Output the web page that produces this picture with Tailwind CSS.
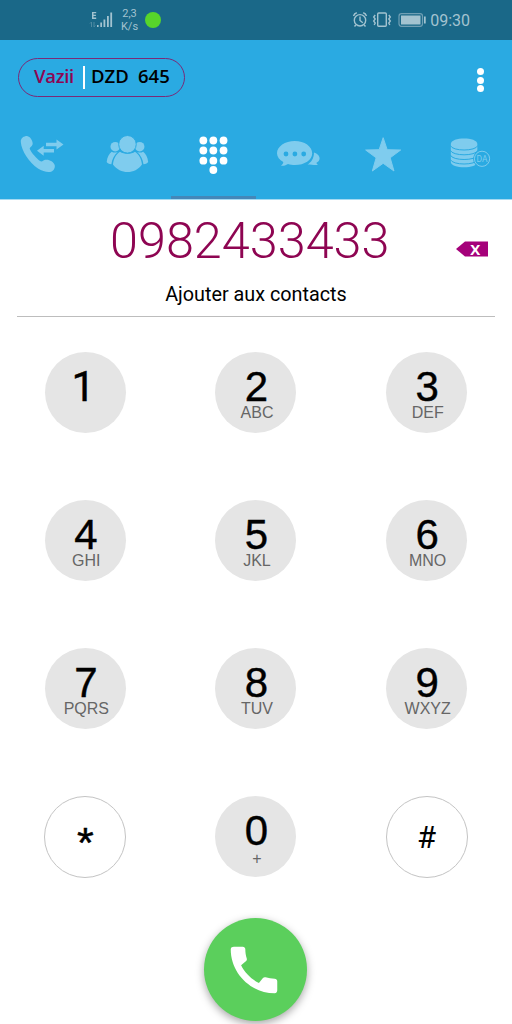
<!DOCTYPE html>
<html lang="fr">

<head>
    <meta charset="UTF-8">
    <meta name="viewport" content="width=device-width, initial-scale=1.0">
    <title>Vazii</title>
    <script src="https://cdn.jsdelivr.net/npm/@tailwindcss/browser@4"></script>
</head>

<body class="bg-white">
    <div class="flex flex-col w-[512px] h-[1024px] overflow-hidden bg-white font-['Roboto',sans-serif]">
        <!-- status bar -->
        <div class="flex justify-between h-10 shrink-0 pl-[89px] pr-[42px] bg-[#1a6888] text-[#a3c3d0]">
            <div class="flex items-center">
                <svg class="w-6 h-5" viewBox="89 10 24 20" fill="currentColor">
                    <path d="M92 12h4.200v1.300h-2.700v1.500h2.400v1.200h-2.400v1.600h2.700v1.300H92z" />
                    <path d="M91.500 22v5m-1.500-3.500l1.500-1.500M94 22v5m0 0l1.300-1.500" stroke="#4f8aa2" fill="none" />
                    <path d="M97 25h1.600v2H97zM100.300 22.500h1.700v4.500h-1.700zM103.500 19.500h1.800v7.500h-1.800zM107 16h1.800v11H107zM110.300 12.500h1.800V27h-1.800z" />
                </svg>
                <div class="flex flex-col items-center w-[31px] pl-[6px] pr-1 text-[11px] leading-[13px]">
                    <span>2,3</span>
                    <span>K/s</span>
                </div>
                <div class="w-4 h-4 ml-[1px] rounded-full bg-[#57d52b]"></div>
            </div>
            <div class="flex items-center">
                <svg class="w-[75px] h-5" viewBox="352 10 75 20" fill="none" stroke="currentColor" stroke-width="1.400">
                    <circle cx="360" cy="20.300" r="5.700" />
                    <path d="M360 16.500v4l2.800 2.300M353.500 16c.500-1.800 1.800-3 3.300-3.300M366.500 16c-.500-1.800-1.800-3-3.300-3.300M355.800 25l-1.300 1.500M364.200 25l1.300 1.500" />
                    <rect x="377.700" y="13" width="8.600" height="13.300" rx="1" />
                    <path d="M375.200 15l-1.500 2 1.500 2-1.500 2 1.500 2-1 2M388.800 15l1.500 2-1.500 2 1.500 2-1.500 2 1 2" />
                    <rect x="399" y="13.700" width="23.500" height="12.600" rx="2.500" stroke="#6f9fb4" stroke-width="1.200" />
                    <path d="M401 15.500h19.500v9H401zM424 16.500h1.700v7H424z" fill="currentColor" stroke="none" />
                </svg>
                <span class="pl-[3px] pt-[2px] text-[16px] leading-5">09:30</span>
            </div>
        </div>

        <!-- header -->
        <header class="flex flex-col h-[160px] shrink-0 border-b border-[#a5daf2] bg-[#2aaae2]">
            <div class="flex items-start justify-between h-[90px] pt-[18px] pl-[18px] pr-7">
                <div class="flex items-center w-[167px] h-[39px] pl-[15px] border border-[#7a2a78] rounded-full font-['Open_Sans',sans-serif] text-[18.500px] leading-none font-semibold">
                    <span class="w-[49px] pb-[2px] tracking-[-0.300px] text-[#8e0552]">Vazii</span>
                    <span class="w-[2px] h-[23px] mr-[6px] bg-white"></span>
                    <span class="w-[47px] pb-[2px] text-black">DZD</span>
                    <span class="pb-[2px] text-black">645</span>
                </div>
                <div class="flex flex-col gap-[1.500px] pt-[10px]">
                    <span class="w-[7px] h-[7px] rounded-full bg-white"></span>
                    <span class="w-[7px] h-[7px] rounded-full bg-white"></span>
                    <span class="w-[7px] h-[7px] rounded-full bg-white"></span>
                </div>
            </div>
            <nav class="grid grid-cols-6 h-[69px] text-[#7fccee]">
                <a class="border-b-[3px] border-transparent">
                    <svg class="w-full h-[50px]" viewBox="0 130 85.333 50" fill="currentColor">
                        <path d="M20.800 142C20.500 138 24 136 27 136C30.500 136.500 33 141.500 32.700 144C32.300 146.500 29.500 147 29.800 149C31.500 153 36.500 158.500 40.500 161.300C42.500 162 43 160.200 45 159.800C49 159 53.500 161.500 54.700 165C55.500 168.500 53 171.500 50 172C46 172.300 42 171 38 168.500C29 162.500 21.500 151 20.800 142Z" />
                        <path d="M46 142.700h10.500v-3.300l7 5-7 5v-3.200H46zM54 149H43.700v-3.300L37 150.800l6.700 5v-3.200H54z" />
                    </svg>
                </a>
                <a class="border-b-[3px] border-transparent">
                    <svg class="w-full h-[50px]" viewBox="85.333 130 85.333 50" fill="currentColor">
                        <circle cx="115.600" cy="146.700" r="4.800" />
                        <circle cx="140" cy="146.700" r="4.800" />
                        <path d="M107 162C107.500 157 109.500 153.500 112 151.700C114 152.800 116 152.800 118 152C114.500 155 112.300 159.500 111.700 164.300C109.500 164 107.500 163 107 162Z" />
                        <path d="M148.500 162C148 157 146 153.500 143.500 151.700C141.500 152.800 139.500 152.800 137.500 152C141 155 143.200 159.500 143.800 164.300C146 164 148 163 148.500 162Z" />
                        <path d="M113.300 164.500C114 158.500 116.500 154 120.300 151.700C124.500 154.500 131.500 154.500 135.300 151.700C139 154 141.700 158.500 142.300 164.500C135.500 174.500 120.500 174.500 113.300 164.500Z" />
                        <circle cx="127.800" cy="144.300" r="8.800" stroke="#2aaae2" />
                    </svg>
                </a>
                <a class="border-b-[3px] border-[#4487b8]">
                    <svg class="w-full h-[50px]" viewBox="170.667 130 85.333 50" fill="#fff">
                        <circle cx="203" cy="140.500" r="3.900" />
                        <circle cx="213" cy="140.500" r="3.900" />
                        <circle cx="223.200" cy="140.500" r="3.900" />
                        <circle cx="203" cy="150.500" r="3.900" />
                        <circle cx="213" cy="150.500" r="3.900" />
                        <circle cx="223.200" cy="150.500" r="3.900" />
                        <circle cx="203" cy="160.700" r="3.900" />
                        <circle cx="213" cy="160.700" r="3.900" />
                        <circle cx="223.200" cy="160.700" r="3.900" />
                        <circle cx="213" cy="170" r="3.900" />
                    </svg>
                </a>
                <a class="border-b-[3px] border-transparent">
                    <svg class="w-full h-[50px]" viewBox="256 130 85.333 50" fill="currentColor">
                        <path d="M314 152.500C317.500 153.500 319.700 156 319.600 158.500C319.500 160.700 318 162 316.500 162.800C316.500 163.700 317.300 164.300 318 165C314 165.300 311 164.500 307.500 164.500C311 162.500 314 158.500 314 152.500Z" />
                        <path d="M294.800 141C304.500 141 312.200 146.500 312.200 153.200C312.200 160 304.500 165 295 165C292.500 165 290 164.600 288 164C285.500 165.500 283.500 166 281 165.800C282.500 164.500 283.200 163.300 283.300 162C279.500 159.800 277 156.800 277 153.200C277 146.500 285 141 294.800 141Z" />
                        <g fill="#2aaae2">
                            <circle cx="286" cy="154" r="2.400" />
                            <circle cx="294.900" cy="154" r="2.400" />
                            <circle cx="303.700" cy="154" r="2.400" />
                        </g>
                    </svg>
                </a>
                <a class="border-b-[3px] border-transparent">
                    <svg class="w-full h-[50px]" viewBox="341.333 130 85.333 50" fill="currentColor" stroke="currentColor" stroke-linejoin="round">
                        <path d="M383.500 137.700L387.500 149.700L401 150L390.500 157.800L394.300 171L383.500 163.300L372.700 171L376.500 157.800L366 150L379.500 149.700Z" />
                    </svg>
                </a>
                <a class="border-b-[3px] border-transparent">
                    <svg class="w-full h-[50px]" viewBox="426.667 130 85.333 50" fill="currentColor">
                        <path d="M450.500 144C450.500 136.700 477 136.700 477 144V162C477 169 450.500 169 450.500 162Z" />
                        <path d="M450 145.500C452 151.500 475.500 151.500 477.500 145.500M450 150.300C452 156.300 475.500 156.300 477.500 150.300M450 155C452 161 475.500 161 477.500 155M450 159.500C452 165.500 475.500 165.500 477.500 159.500" fill="none" stroke="#2aaae2" />
                        <circle cx="481.700" cy="158.800" r="9" fill="#2aaae2" />
                        <circle cx="481.700" cy="158.800" r="7.600" fill="none" stroke="currentColor" />
                        <text x="481.700" y="161.800" text-anchor="middle" class="text-[8.500px] font-['Roboto',sans-serif]">DA</text>
                    </svg>
                </a>
            </nav>
        </header>

        <!-- dialed number -->
        <section class="flex flex-col h-[117px] shrink-0 mx-[17px] border-b border-[#bdbdbd]">
            <div class="flex items-center h-[82px]">
                <span class="w-[439px] pl-[93px] text-[50.400px] leading-[82px] font-light text-[#8e0552]">0982433433</span>
                <svg class="w-8 h-4 mt-4" viewBox="0 0 32 16">
                    <path d="M0 8L9 .500H32V15.500H9Z" fill="#a5017a" />
                    <text x="19.300" y="13.500" text-anchor="middle" fill="#fff" class="text-[15px] font-bold font-['Open_Sans',sans-serif]">X</text>
                </svg>
            </div>
            <a class="text-center text-[19.800px] leading-[25px] text-black">Ajouter aux contacts</a>
        </section>

        <!-- keypad, filled by the script below -->
        <main id="keypad" class="grid grid-cols-3 auto-rows-[148px] justify-items-center h-[601px] shrink-0 pt-[35px] font-['Liberation_Sans',sans-serif]"></main>

        <div class="flex justify-center">
            <button class="flex items-center justify-center w-[103px] h-[103px] pr-[3px] mr-[1px] rounded-full bg-[#5bcf5c] shadow-[0_3px_8px_rgba(0,0,0,0.35)]">
                <svg class="w-[62px] h-[62px]" viewBox="0 0 24 24" fill="#fff">
                    <path d="M20.010 15.380c-1.230 0-2.420-.2-3.530-.56-.35-.12-.74-.03-1.010.24l-1.570 1.970c-2.830-1.350-5.480-3.900-6.890-6.830l1.950-1.660c.27-.28.35-.67.24-1.020-.37-1.110-.56-2.300-.56-3.530 0-.54-.45-.99-.99-.99H4.190C3.650 3 3 3.240 3 3.990 3 13.280 10.730 21 20.010 21c.71 0 .99-.63.99-1.180v-3.450c0-.54-.45-.99-.99-.99z" />
                </svg>
            </button>
        </div>
    </div>

    <script>
        const keys = [
            ['1', ''], ['2', 'ABC'], ['3', 'DEF'],
            ['4', 'GHI'], ['5', 'JKL'], ['6', 'MNO'],
            ['7', 'PQRS'], ['8', 'TUV'], ['9', 'WXYZ'],
            ['*', null], ['0', '+'], ['#', null],
        ];

        function createKeyHTML([digit, letters]) {
            if (letters === null) {
                const symbolClass = digit === '*'
                    ? "pt-[11px] text-[43px] [-webkit-text-stroke:0.5px_black]"
                    : "text-[31px] font-['Roboto',sans-serif]";
                return `<button class="flex items-center justify-center w-[82px] h-[82px] rounded-full border border-[#c4c4c4] text-black">
                    <span class="leading-none ${symbolClass}">${digit}</span>
                </button>`;
            }
            // the 1 is drawn without a foot
            const digitClass = digit === '1' ? "pr-[4px] font-['Roboto',sans-serif]" : 'pl-[1px]';
            const lettersClass = digit === '0' ? 'pt-[2px]' : '';
            return `<button class="flex flex-col items-center w-[81px] h-[81px] pt-[15px] rounded-full bg-[#e5e5e5]">
                <span class="text-[42px] leading-[40px] text-black [-webkit-text-stroke:0.4px_black] ${digitClass}">${digit}</span>
                <span class="pl-[2px] text-[16px] leading-3 text-[#666] ${lettersClass}">${letters}</span>
            </button>`;
        }

        document.getElementById('keypad').innerHTML = keys.map(createKeyHTML).join('');
    </script>
</body>

</html>
